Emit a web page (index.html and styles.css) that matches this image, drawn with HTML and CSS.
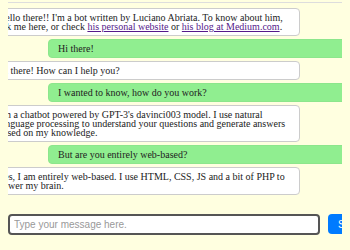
FILE: index.html
```html
<!DOCTYPE html>
<html lang="en">
<head>
    <meta charset="UTF-8">
    <meta name="viewport" content="width=device-width, initial-scale=1.0">
    <title>Chatbot</title>
    <link rel="stylesheet" href="styles.css">
</head>
<body>

    <!-- Chat log -->
    <div class="chat-log">
        <div class="msg bot">Hello there!! I'm a bot written by Luciano Abriata. To know about him, ask me here, or check <a href="#">his personal website</a> or <a href="#">his blog at Medium.com</a>.</div>
        <div class="msg user">Hi there!</div>
        <div class="msg bot">Hi there! How can I help you?</div>
        <div class="msg user">I wanted to know, how do you work?</div>
        <div class="msg bot">I'm a chatbot powered by GPT-3's davinci003 model. I use natural language processing to understand your questions and generate answers based on my knowledge.</div>
        <div class="msg user">But are you entirely web-based?</div>
        <div class="msg bot">Yes, I am entirely web-based. I use HTML, CSS, JS and a bit of PHP to power my brain.</div>
    </div>

    <!-- Input row -->
    <div class="input-row">
        <input type="text" class="msg-input" placeholder="Type your message here.">
        <button class="send-btn">Send</button>
    </div>

</body>
</html>
```

FILE: styles.css
```css
html {
    overflow: hidden;
}
body {
    font-family: "Liberation Serif", "Times New Roman", serif;
    margin: 0 8px;
    padding: 0;
    background: #ffffe0;
}
.chat-log {
    margin: 2px 0 0 -20px;
    width: 420px;
    border-top: 1px solid #ddd;
    padding-top: 5px;
    display: flex;
    flex-direction: column;
    gap: 3px;
}
.msg {
    font-size: 10px;
    line-height: 9px;
    padding: 4px 4px 4px 9px;
    border-radius: 4px;
    color: #222;
}
.msg a {
    color: #551a8b;
}
.bot {
    width: 312px;
    box-sizing: border-box;
    background: white;
    border: 1px solid #ccc;
}
.user {
    margin-left: 60px;
    background: #90ee90;
    border: 1px solid #8ce68c;
}
.input-row {
    display: flex;
    gap: 8px;
    margin-top: 19px;
    width: 380px;
}
.msg-input {
    width: 312px;
    height: 21px;
    box-sizing: border-box;
    border: 2px solid #555;
    border-radius: 4px;
    padding: 0 4px;
    font-family: "Liberation Sans", Arial, sans-serif;
    font-size: 10px;
    background: white;
}
.msg-input::placeholder {
    color: #999;
}
.send-btn {
    background: #007BFF;
    color: white;
    border: none;
    border-radius: 4px;
    height: 20px;
    padding: 0 10px;
    font-family: "Liberation Sans", Arial, sans-serif;
    font-size: 10px;
}
```
